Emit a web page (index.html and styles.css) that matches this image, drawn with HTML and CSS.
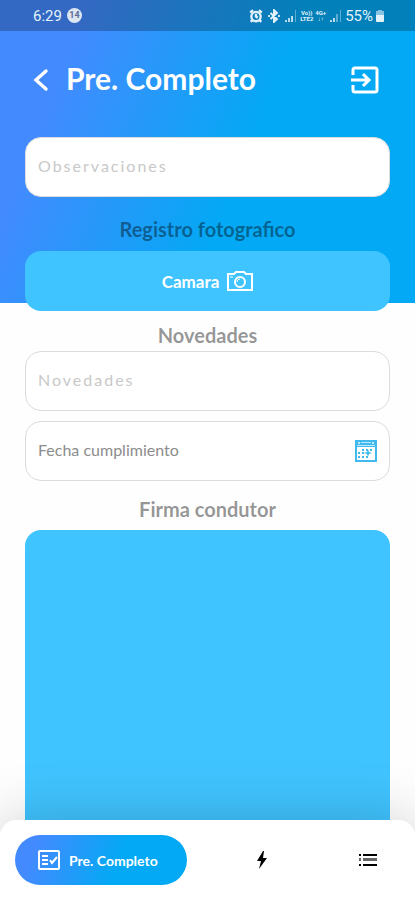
FILE: index.html
```html
<!DOCTYPE html>
<html lang="es">
<head>
    <meta charset="UTF-8">
    <meta name="viewport" content="width=device-width, initial-scale=1.0">
    <title>Pre. Completo</title>
    <link rel="stylesheet" href="styles.css">
</head>
<body>
    <div class="app">
        <div class="status-bar">
            <span class="status-time">6:29</span>
            <span class="status-badge">14</span>
            <div class="status-icons">
                <svg class="status-alarm" width="14" height="14" viewBox="0 0 24 24" fill="none" stroke="currentColor" stroke-width="4">
                    <circle cx="12" cy="13" r="8"/>
                    <path d="M12 8v5l3 2M2 6l5-4M22 6l-5-4M6 19l-3 3M18 19l3 3"/>
                </svg>
                <svg width="14" height="14" viewBox="0 0 24 24" fill="none" stroke="currentColor" stroke-width="3.4">
                    <path d="M6 7l11 10-5 5V2l5 5L6 17M2 12h3M19 12h3"/>
                </svg>
                <svg class="status-signal" width="13" height="12" viewBox="0 0 13 12" fill="currentColor" opacity=".8">
                    <path d="M0 10h2v2H0zM3 8h2v4H3zM6 6h2v6H6z"/>
                    <path opacity=".5" d="M10 0h1v12h-1z"/>
                </svg>
                <span class="status-network">Vo))<br>LTE2</span>
                <span class="status-network">4G+<br>↓↑</span>
                <svg class="status-signal" width="13" height="12" viewBox="0 0 13 12" fill="currentColor" opacity=".8">
                    <path d="M0 10h2v2H0zM3 8h2v4H3z"/>
                    <path opacity=".5" d="M6 4h2v8H6zM10 0h1v12h-1z"/>
                </svg>
                <span class="status-battery">55%</span>
                <svg width="10" height="12" viewBox="0 0 10 12" fill="currentColor">
                    <path opacity=".6" d="M3 0h4v1h2v5H1V1h2z"/>
                    <path d="M1 5h8v6q0 1-1 1H2q-1 0-1-1z"/>
                </svg>
            </div>
        </div>

        <header class="header">
            <button class="icon-btn" type="button" aria-label="Volver">
                <svg width="16" height="24" viewBox="0 0 16 24" fill="none" stroke="currentColor" stroke-width="3.4" stroke-linecap="round">
                    <path d="M13 3L3 12l10 9"/>
                </svg>
            </button>
            <h1 class="title">Pre. Completo</h1>
            <button class="icon-btn" type="button" aria-label="Salir">
                <svg width="28" height="28" viewBox="0 0 28 28" fill="none" stroke="currentColor" stroke-width="3">
                    <path d="M2 9V4q0-2 2-2h20q2 0 2 2v20q0 2-2 2H4q-2 0-2-2v-5M0 14h18M12 8l6 6-6 6"/>
                </svg>
            </button>
        </header>

        <main class="content">
            <input class="field" type="text" placeholder="Observaciones" aria-label="Observaciones">

            <h2 class="section-title">Registro fotografico</h2>
            <button class="camera-btn" type="button">
                Camara
                <svg width="26" height="20" viewBox="0 0 26 20" fill="none" stroke="currentColor" stroke-width="2">
                    <path d="M1 3h6l2-2h8l2 2h6v16H1z"/>
                    <circle cx="13" cy="11" r="5"/>
                    <path stroke-width="1" d="M3 6h3M10 11q0-3 3-3"/>
                </svg>
            </button>

            <h2 class="section-title section-title-tight">Novedades</h2>
            <input class="field" type="text" placeholder="Novedades" aria-label="Novedades">

            <div class="field date-field">
                <input class="date-input" type="text" placeholder="Fecha cumplimiento" aria-label="Fecha cumplimiento">
                <button class="icon-btn date-btn" type="button" aria-label="Abrir calendario">
                    <svg width="22" height="22" viewBox="0 0 22 22" fill="currentColor">
                        <path fill-rule="evenodd" d="M0 0h22v22H0zM2 7v13h18V7z"/>
                        <path fill="#bdeaff" d="M3 2h2v2H3zM17 2h2v2h-2zM6 2h10v1H6zM2 5h18v1H2z"/>
                        <path d="M7 9h2v2H7zM11 9h2v2h-2zM15 9h2v2h-2zM3 12h2v2H3zM7 12h2v2H7zM3 16h2v2H3zM7 16h2v2H7zM11 16h2v2h-2zM13 9l1 3 3 1-3 1-1 3-1-3-3-1 3-1z"/>
                    </svg>
                </button>
            </div>

            <h2 class="section-title section-title-signature">Firma condutor</h2>
            <canvas class="signature" aria-label="Firma condutor"></canvas>
        </main>

        <nav class="bottom-nav">
            <a class="nav-item nav-active" href="#completo">
                <svg width="22" height="20" viewBox="0 0 22 20" fill="none" stroke="currentColor" stroke-width="2">
                    <rect x="1" y="1" width="20" height="18" rx="1"/>
                    <path d="M4 6h6M4 10h6M4 14h6M12 10l2 3 5-6"/>
                </svg>
                Pre. Completo
            </a>
            <a class="nav-item" href="#rapido" aria-label="Rapido">
                <svg width="20" height="18" viewBox="0 0 20 18" fill="currentColor">
                    <path d="M11 0L5 10h4L7 18l8-11h-4l1-7z"/>
                </svg>
            </a>
            <a class="nav-item" href="#lista" aria-label="Lista">
                <svg width="20" height="12" viewBox="0 0 20 12" fill="currentColor">
                    <path d="M1 0h2v2H1zM5 0h14v2H5zM1 10h2v2H1zM5 10h14v2H5z"/>
                    <path opacity=".6" d="M1 4h2v3H1zM5 4h14v3H5z"/>
                </svg>
            </a>
        </nav>
    </div>
</body>
</html>
```
FILE: styles.css
```css
* {
    box-sizing: border-box;
}
body {
    margin: 0;
    font-family: Lato, 'Liberation Sans', sans-serif;
    background: #fefefe;
}
button {
    font-family: inherit;
    border: 0;
    cursor: pointer;
}
svg {
    display: block;
    flex: none;
}
.app {
    display: flex;
    flex-direction: column;
    height: 100vh;
    overflow: hidden;
    background: linear-gradient(112deg, #448aff 16%, #03a9f4 58%) no-repeat;
    background-size: 100% 303px;
}
.status-bar {
    display: flex;
    align-items: center;
    height: 31px;
    padding: 0 30px 0 33px;
    background: rgba(0, 0, 0, 0.24);
    color: #e2f2fb;
    font-family: Roboto, sans-serif;
    font-size: 15px;
}
.status-badge {
    width: 15px;
    height: 15px;
    margin-left: 5px;
    border-radius: 50%;
    background: #dce5f2;
    color: #5c6f96;
    font-size: 9px;
    font-weight: bold;
    line-height: 15px;
    text-align: center;
}
.status-icons {
    display: flex;
    align-items: center;
    gap: 2px;
    margin-left: auto;
}
.status-alarm {
    margin-right: 2px;
}
.status-signal {
    margin-left: 2px;
}
.status-network {
    font-size: 6px;
    font-weight: bold;
    line-height: 6px;
    text-align: center;
}
.header {
    display: flex;
    align-items: center;
    height: 98px;
    padding: 0 36px 0 33px;
    color: #fff;
}
.icon-btn {
    padding: 0;
    background: none;
    color: inherit;
}
.title {
    flex: 1;
    margin: 0 0 4px 17px;
    font-size: 30px;
    font-weight: bold;
    line-height: 36px;
}
.content {
    display: flex;
    flex-direction: column;
    flex: 1;
    min-height: 0;
    padding: 8px 25px 0;
}
.field {
    flex: none;
    width: 100%;
    height: 60px;
    padding: 0 12px 4px;
    border: 1px solid #dcdcdc;
    border-radius: 16px;
    background: #fff;
    color: #555;
    font-family: inherit;
    font-size: 16px;
}
.field::placeholder {
    color: #c8c8c8;
    letter-spacing: 2px;
}
.section-title {
    margin: 20px 0 10px;
    color: rgba(0, 0, 0, 0.42);
    font-size: 20px;
    font-weight: bold;
    line-height: 24px;
    text-align: center;
}
.section-title-tight {
    margin: 12px 0 4px;
}
.section-title-signature {
    margin: 16px 0 9px;
}
.camera-btn {
    display: flex;
    align-items: center;
    justify-content: center;
    gap: 8px;
    flex: none;
    height: 60px;
    border-radius: 16px;
    background: #40c4ff;
    color: #fff;
    font-size: 17px;
    font-weight: bold;
}
.date-field {
    display: flex;
    align-items: center;
    margin-top: 10px;
    padding: 0 12px;
}
.date-input {
    flex: 1;
    min-width: 0;
    padding: 0 0 4px;
    border: 0;
    background: none;
    font-family: inherit;
    font-size: 16px;
}
.date-input::placeholder {
    color: #8c8c8c;
}
.date-btn {
    color: #40b9ec;
}
.signature {
    flex: 1;
    width: 100%;
    min-height: 0;
    border-radius: 16px 16px 0 0;
    background: #40c4ff;
}
.bottom-nav {
    display: flex;
    align-items: center;
    justify-content: space-between;
    z-index: 1;
    height: 80px;
    margin-top: -16px;
    padding: 0 16px 0 15px;
    border-radius: 16px 16px 0 0;
    background: #fff;
    box-shadow: 0 0 60px rgba(0, 0, 0, 0.2);
}
.nav-item {
    padding: 16px 21px;
    color: #000;
    text-decoration: none;
}
.nav-active {
    display: flex;
    align-items: center;
    gap: 9px;
    width: 172px;
    height: 50px;
    padding: 0 23px;
    border-radius: 25px;
    background: linear-gradient(112deg, #448aff 12%, #03a9f4 60%);
    color: #fff;
    font-size: 14px;
    font-weight: bold;
    white-space: nowrap;
}
```
